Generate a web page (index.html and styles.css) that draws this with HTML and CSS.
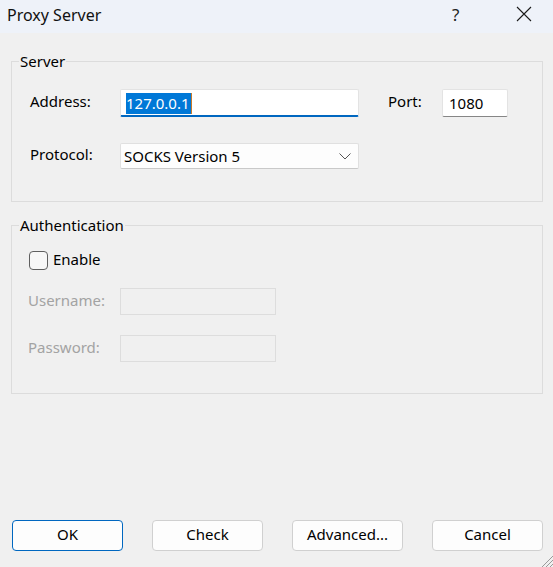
FILE: index.html
```html
<!DOCTYPE html>
<html>
<head>
<meta charset="utf-8">
<link rel="stylesheet" href="styles.css">
</head>
<body>
<div class="window">
  <div class="titlebar">
    <span class="title">Proxy Server</span>
    <span class="help">?</span>
    <span class="close"><svg width="16" height="16" viewBox="0 0 16 16"><path d="M1 1L15 15M15 1L1 15" stroke="#1a1a1a" stroke-width="1.1" fill="none"/></svg></span>
  </div>
  <div class="content">
    <fieldset class="group server">
      <legend>Server</legend>
      <div class="server-grid">
        <span class="label">Address:</span>
        <div class="field address"><span class="sel">127.0.0.1</span><span class="caret"></span></div>
        <span class="label port-label">Port:</span>
        <div class="field port">1080</div>
        <span class="label">Protocol:</span>
        <div class="field combo"><span>SOCKS Version 5</span><svg width="12" height="7" viewBox="0 0 12 7"><path d="M0.5 0.5L6 6L11.5 0.5" stroke="#555" stroke-width="1" fill="none"/></svg></div>
      </div>
    </fieldset>
    <fieldset class="group auth">
      <legend>Authentication</legend>
      <div class="auth-body">
        <div class="check-row"><span class="checkbox"></span><span class="check-label">Enable</span></div>
        <div class="auth-grid">
          <span class="label disabled">Username:</span>
          <div class="field disabled-field"></div>
          <span class="label disabled">Password:</span>
          <div class="field disabled-field"></div>
        </div>
      </div>
    </fieldset>
  </div>
  <div class="buttons">
    <button class="btn default">OK</button>
    <button class="btn">Check</button>
    <button class="btn">Advanced...</button>
    <button class="btn">Cancel</button>
  </div>
  <svg class="grip" width="13" height="13" viewBox="0 0 13 13"><path d="M13 2L2 13M13 6L6 13M13 10L10 13" stroke="#9a9a9a" stroke-width="1" fill="none"/></svg>
</div>
</body>
</html>
```
FILE: styles.css
```css
* { box-sizing: border-box; }
html, body { margin: 0; padding: 0; }
body {
  width: 553px;
  height: 567px;
  overflow: hidden;
  font-family: "Noto Sans", "Open Sans", sans-serif;
  font-size: 14px;
  color: #000;
  background: #f0f0f0;
}
.window {
  position: relative;
  width: 553px;
  height: 567px;
  display: flex;
  flex-direction: column;
}
.titlebar {
  height: 33px;
  background: #eef2f9;
  display: flex;
  align-items: center;
  flex-shrink: 0;
}
.title {
  font-size: 16px;
  margin-left: 7px;
  margin-top: -4px;
  flex: 1;
  color: #111;
}
.help {
  font-size: 17px;
  width: 14px;
  margin-top: -4px;
  color: #222;
  margin-right: 50px;
}
.close {
  width: 16px;
  height: 16px;
  margin-top: -5px;
  margin-right: 21px;
  display: flex;
}
.content {
  padding: 18px 10px 0 11px;
  display: flex;
  flex-direction: column;
}
.group {
  margin: 0;
  padding: 0;
  border: 1px solid #dcdcdc;
  min-width: 0;
}
.group legend {
  padding: 0 1px;
  margin-left: 7px;
  line-height: 20px;
  font-size: 15px;
}
.server-grid {
  display: grid;
  grid-template-columns: 90px 239px 29px 54px 66px;
  grid-template-rows: 28px 26px;
  row-gap: 26px;
  align-items: center;
  padding: 18px 0 32px 18px;
}
.port-label { grid-column: 4; }
.label {
  font-size: 15px;
  margin-top: -4px;
}
.field {
  height: 100%;
  background: #fff;
  border: 1px solid #e3e3e3;
  border-radius: 2px;
  display: flex;
  align-items: center;
  font-size: 15px;
}
.address {
  border-bottom: 2px solid #0067c0;
  padding-left: 5px;
  padding-top: 1px;
}
.sel {
  background: #0078d7;
  color: #fff;
  line-height: 21px;
  padding: 0 1px 0 0;
}
.caret {
  width: 1px;
  height: 21px;
  background: #c87a2a;
}
.port {
  grid-column: 5;
  border-bottom-color: #868686;
  padding-left: 6px;
}
.combo {
  grid-column: 2;
  background: #fdfdfd;
  border-color: #e0e0e0;
  border-bottom-color: #c9c9c9;
  padding: 0 7px 0 3px;
  justify-content: space-between;
}
.combo svg { margin-top: 1px; }
.auth { margin-top: 13px; }
.auth-body {
  padding: 16px 0 31px 17px;
}
.check-row {
  display: flex;
  align-items: center;
  height: 19px;
}
.checkbox {
  width: 19px;
  height: 19px;
  border: 1px solid #5f5f5f;
  border-radius: 4px;
  background: #f7f7f7;
}
.check-label {
  font-size: 15px;
  margin-left: 5px;
  margin-top: -3px;
}
.auth-grid {
  display: grid;
  grid-template-columns: 92px 156px;
  grid-template-rows: 27px 27px;
  row-gap: 20px;
  align-items: center;
  margin-top: 18px;
  margin-left: -1px;
}
.disabled { color: #a3a3a3; }
.disabled-field {
  background: #f0f0f0;
  border: 1px solid #dddddd;
  border-radius: 0;
}
.buttons {
  margin-top: auto;
  padding: 0 10px 16px 12px;
  display: flex;
  justify-content: space-between;
}
.btn {
  width: 111px;
  height: 31px;
  font-family: inherit;
  font-size: 15px;
  background: #fdfdfd;
  border: 1px solid #d0d0d0;
  border-radius: 4px;
  color: #000;
  padding: 0 0 3px;
}
.btn.default {
  border-color: #0067c0;
  background: #fdfdfd;
}
.grip {
  position: absolute;
  right: 0;
  bottom: 0;
}
```
